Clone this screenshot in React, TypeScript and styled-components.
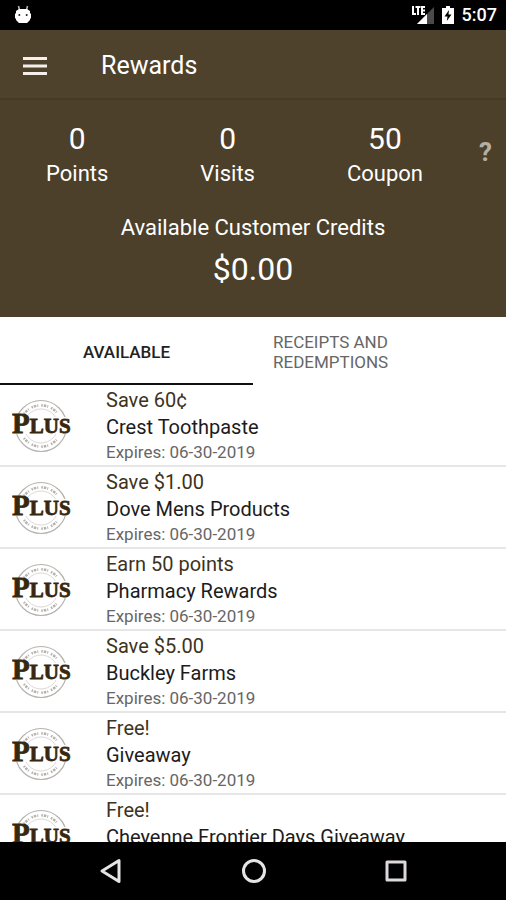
import React from "react";
import styled, { createGlobalStyle } from "styled-components";

const GlobalStyle = createGlobalStyle`
  *, *::before, *::after { box-sizing: border-box; }
  body {
    margin: 0;
    background: #fff;
    font-family: Roboto, "Liberation Sans", sans-serif;
  }
  button { font: inherit; border: 0; padding: 0; background: none; cursor: pointer; }
  svg { display: block; }
`;

const Screen = styled.div`
  display: flex;
  flex-direction: column;
  height: 100vh;
  overflow: hidden;
`;

const StatusBar = styled.div`
  display: flex;
  flex: none;
  align-items: center;
  justify-content: space-between;
  height: 30px;
  padding: 0 9px 0 14px;
  background: #000;
  color: #fff;
`;

const StatusIcons = styled.div`
  display: flex;
  align-items: center;
  gap: 8px;
`;

const Clock = styled.time`
  font-size: 18px;
  font-weight: 500;
  line-height: 30px;
`;

const AppBar = styled.header`
  display: flex;
  flex: none;
  align-items: center;
  gap: 54px;
  height: 70px;
  padding: 4px 23px 0;
  background: #4e422c;
  border-bottom: 2px solid #463a24;
  color: #fff;
`;

const MenuButton = styled.button`
  color: #f4efe9;
`;

const Title = styled.h1`
  margin: 0;
  font-size: 25px;
  font-weight: 400;
  line-height: 32px;
`;

const Summary = styled.section`
  flex: none;
  padding: 20px 0 29px;
  background: #4c402a;
  color: #fff;
  text-align: center;
`;

const Stats = styled.div`
  display: flex;
  align-items: center;
`;

const StatList = styled.dl`
  display: flex;
  flex: 1;
  justify-content: space-between;
  margin: 0;
  padding-left: 46px;
`;

const Stat = styled.div`
  display: flex;
  flex-direction: column-reverse;
`;

const Label = styled.dt`
  font-size: 22px;
  line-height: 32px;
`;

const Amount = styled.dd`
  margin: 0;
  font-size: 30px;
  line-height: 38px;
`;

const HelpButton = styled.button`
  width: 83px;
  padding: 0 14px 6px 0;
  color: #b5aea3;
  font-size: 26px;
  font-weight: 700;
  line-height: 38px;
  text-align: right;
`;

const Credits = styled.dl`
  margin: 22px 0 0;
`;

const CreditAmount = styled(Amount)`
  padding-top: 6px;
  font-size: 32px;
`;

const Tabs = styled.div`
  display: flex;
  flex: none;
  height: 68px;
`;

const Tab = styled.button<{ $active?: boolean }>`
  flex: 1;
  padding: 4px 20px 0;
  border-bottom: 2px solid ${(p) => (p.$active ? "#111" : "transparent")};
  color: ${(p) => (p.$active ? "#222" : "#666")};
  font-size: 17px;
  font-weight: ${(p) => (p.$active ? 500 : 400)};
  line-height: 20px;
  text-align: ${(p) => (p.$active ? "center" : "left")};
`;

const TabLabel = styled.span`
  display: block;
  max-width: 130px;
  margin-right: auto;
`;

const OfferList = styled.ul`
  flex: 1;
  min-height: 0;
  margin: 0;
  padding: 0;
  overflow: hidden;
  list-style: none;
`;

const Offer = styled.li`
  display: flex;
  gap: 34px;
  height: 82px;
  padding: 0 12px;
  border-bottom: 2px solid #e6e6e6;
`;

const Deal = styled.p`
  margin: 0;
  color: #3d3320;
  font-size: 20px;
  line-height: 30px;
`;

const Product = styled.p`
  margin: 0;
  color: #1c1c1c;
  font-size: 20px;
  line-height: 24px;
`;

const Expiry = styled.p`
  margin: 0;
  color: #666;
  font-size: 17px;
  line-height: 26px;
`;

const NavBar = styled.nav`
  display: flex;
  flex: none;
  align-items: center;
  justify-content: space-around;
  height: 58px;
  padding: 0 40px;
  background: #000;
`;

const RobotIcon = () => (
  <svg width="18" height="20" viewBox="0 0 18 20" aria-hidden="true">
    <path d="M4.500 1 5.500 5M13.500 1l-1 4" stroke="#bbb" strokeWidth="1.500" />
    <path d="M5 4h8l3 2v2.500h1v5h-1v1.500l-3 3H5l-3-3V13.500H1v-5h1V6Z" fill="#fff" />
    <circle cx="5.300" cy="10" r="1" fill="#222" />
    <circle cx="12.700" cy="10" r="1" fill="#222" />
  </svg>
);

const SignalIcon = () => (
  <svg width="22" height="20" viewBox="0 0 22 20" aria-label="LTE signal">
    <path d="M22 2v17H5Z" fill="#4a4a4a" />
    <path d="M15 9v10H5Z" fill="#fff" />
    <path d="M1 1v8h3M3.500 2h5M6 2v8M13 2H10V9h3M10 5.500h3" fill="none" stroke="#fff" strokeWidth="2" />
  </svg>
);

const BatteryIcon = () => (
  <svg width="12" height="18" viewBox="0 0 12 18" aria-label="Battery charging">
    <path d="M4 0h4v2h4v16H0V2h4Z" fill="#fff" />
    <path d="M7 4 2.500 10.500H5.500L4.800 15 9.500 8.500H6.500Z" fill="#000" />
  </svg>
);

const MenuIcon = () => (
  <svg width="24" height="18" viewBox="0 0 24 18" aria-hidden="true">
    <path d="M0 1.500h24M0 9h24M0 16.500h24" stroke="currentColor" strokeWidth="3" />
  </svg>
);

const PlusLogo = () => (
  <svg width="60" height="80" viewBox="0 0 60 80" role="img" aria-label="Plus">
    <g fill="none" stroke="#b5b2ae">
      <circle cx="29" cy="41" r="25.500" strokeWidth="1.200" />
      <circle cx="29" cy="41" r="17" strokeWidth="0.800" stroke="#d0cdca" />
      <path d="M12 29a21 21 0 0 1 34 0" strokeWidth="2.500" strokeDasharray="1.500 1 2.500 1 1 3" />
      <path d="M12 53a21 21 0 0 0 34 0" strokeWidth="2.500" strokeDasharray="1.500 1 2.500 1 1 3" />
    </g>
    <path d="M1 30h17v2h38v17H1Z" fill="#fff" />
    <text x="0" y="48" fill="#36280f" stroke="#36280f" strokeWidth="0.800" fontFamily="Liberation Serif, serif" fontWeight="700" fontSize="29">
      P<tspan fontSize="21">LUS</tspan>
    </text>
  </svg>
);

const offers = [
  ["Save 60¢", "Crest Toothpaste"],
  ["Save $1.00", "Dove Mens Products"],
  ["Earn 50 points", "Pharmacy Rewards"],
  ["Save $5.00", "Buckley Farms"],
  ["Free!", "Giveaway"],
  ["Free!", "Cheyenne Frontier Days Giveaway"],
];

const stats = [
  ["0", "Points"],
  ["0", "Visits"],
  ["50", "Coupon"],
];

export default function App() {
  return (
    <Screen>
      <GlobalStyle />
      <StatusBar>
        <RobotIcon />
        <StatusIcons>
          <SignalIcon />
          <BatteryIcon />
          <Clock>5:07</Clock>
        </StatusIcons>
      </StatusBar>
      <AppBar>
        <MenuButton aria-label="Open menu"><MenuIcon /></MenuButton>
        <Title>Rewards</Title>
      </AppBar>
      <Summary>
        <Stats>
          <StatList>
            {stats.map(([amount, label]) => (
              <Stat key={label}>
                <Label>{label}</Label>
                <Amount>{amount}</Amount>
              </Stat>
            ))}
          </StatList>
          <HelpButton aria-label="Help">?</HelpButton>
        </Stats>
        <Credits>
          <Label>Available Customer Credits</Label>
          <CreditAmount>$0.00</CreditAmount>
        </Credits>
      </Summary>
      <Tabs role="tablist">
        <Tab role="tab" aria-selected="true" $active>AVAILABLE</Tab>
        <Tab role="tab" aria-selected="false"><TabLabel>RECEIPTS AND REDEMPTIONS</TabLabel></Tab>
      </Tabs>
      <OfferList>
        {offers.map(([deal, product]) => (
          <Offer key={product}>
            <PlusLogo />
            <div>
              <Deal>{deal}</Deal>
              <Product>{product}</Product>
              <Expiry>Expires: 06-30-2019</Expiry>
            </div>
          </Offer>
        ))}
      </OfferList>
      <NavBar aria-label="System">
        <button aria-label="Back">
          <svg width="24" height="26" viewBox="0 0 24 26" fill="none" stroke="#e4e4e4" strokeWidth="3" strokeLinejoin="round">
            <path d="M20 2.500v21L3 13Z" />
          </svg>
        </button>
        <button aria-label="Home">
          <svg width="26" height="26" viewBox="0 0 26 26" fill="none" stroke="#e4e4e4" strokeWidth="3">
            <circle cx="13" cy="13" r="10.500" />
          </svg>
        </button>
        <button aria-label="Recent apps">
          <svg width="22" height="22" viewBox="0 0 22 22" fill="none" stroke="#dcd8dc" strokeWidth="3" strokeLinejoin="round">
            <rect x="2" y="2" width="18" height="18" />
          </svg>
        </button>
      </NavBar>
    </Screen>
  );
}
